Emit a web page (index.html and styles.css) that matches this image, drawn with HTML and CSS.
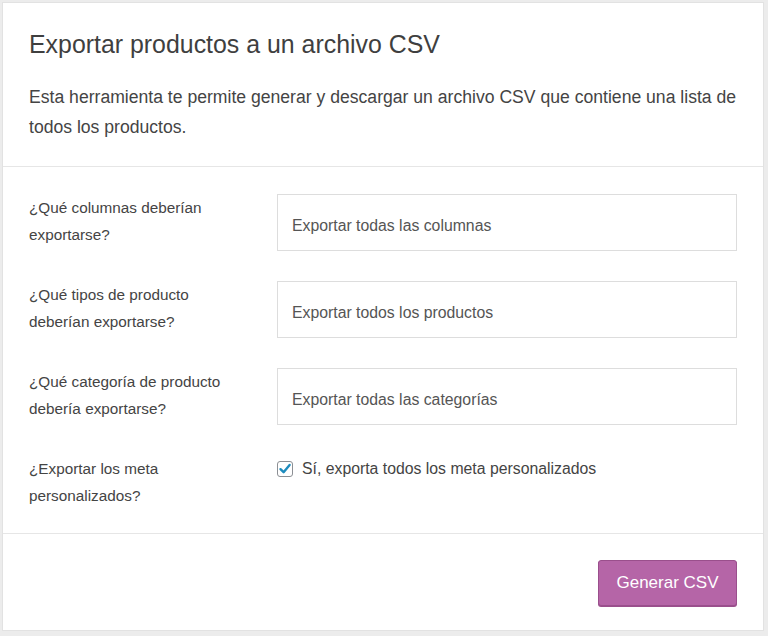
FILE: index.html
```html
<!DOCTYPE html>
<html lang="es">
<head>
<meta charset="utf-8">
<title>Exportar productos</title>
<link rel="stylesheet" href="styles.css">
</head>
<body>
<div class="card">
  <header class="card-head">
    <h1 class="title">Exportar productos a un archivo CSV</h1>
    <p class="desc">Esta herramienta te permite generar y descargar un archivo CSV que contiene una lista de todos los productos.</p>
  </header>
  <section class="form">
    <div class="row">
      <label class="label">¿Qué columnas deberían exportarse?</label>
      <div class="field">Exportar todas las columnas</div>
    </div>
    <div class="row">
      <label class="label">¿Qué tipos de producto deberían exportarse?</label>
      <div class="field">Exportar todos los productos</div>
    </div>
    <div class="row">
      <label class="label">¿Qué categoría de producto debería exportarse?</label>
      <div class="field">Exportar todas las categorías</div>
    </div>
    <div class="row row-check">
      <label class="label">¿Exportar los meta personalizados?</label>
      <div class="check">
        <span class="box"><svg width="14" height="14" viewBox="0 0 14 14"><path d="M2.5 7.2 L5.6 10.2 L11.6 3" fill="none" stroke="#1e8cbe" stroke-width="2.4" stroke-linecap="round" stroke-linejoin="round"/></svg></span>
        <span class="check-text">Sí, exporta todos los meta personalizados</span>
      </div>
    </div>
  </section>
  <footer class="card-foot">
    <button class="btn">Generar CSV</button>
  </footer>
</div>
</body>
</html>
```
FILE: styles.css
```css
html, body {
  margin: 0;
  padding: 0;
}
body {
  background: #ececec;
  font-family: "Liberation Sans", Arial, sans-serif;
  color: #444;
  padding: 2px 4px 5px 2px;
}
.card {
  background: #fff;
  border: 1px solid #e2e2e2;
  box-sizing: border-box;
  height: 629px;
}
.card-head {
  padding: 26px 26px 24px;
  border-bottom: 1px solid #e6e6e6;
}
.title {
  margin: 0;
  font-size: 24.9px;
  line-height: 30px;
  font-weight: 400;
  color: #3f3f3f;
}
.desc {
  margin: 23px 0 0;
  font-size: 17.6px;
  line-height: 30px;
  color: #444;
}
.form {
  padding: 27px 26px 24px;
  border-bottom: 1px solid #e6e6e6;
  display: flex;
  flex-direction: column;
  gap: 30px;
}
.row {
  display: grid;
  grid-template-columns: 248px 1fr;
  align-items: start;
}
.label {
  font-size: 15.3px;
  line-height: 27px;
  color: #444;
  padding-right: 50px;
}
.field {
  height: 57px;
  box-sizing: border-box;
  border: 1px solid #ddd;
  display: flex;
  align-items: center;
  padding: 6px 14px 0;
  font-size: 15.8px;
  color: #555;
}
.check {
  display: flex;
  align-items: center;
  gap: 9px;
  height: 27px;
}
.box {
  width: 16px;
  height: 16px;
  border: 1px solid #8c8f94;
  border-radius: 3px;
  box-sizing: border-box;
  display: flex;
  align-items: center;
  justify-content: center;
  background: #fff;
}
.check-text {
  font-size: 15.8px;
  color: #444;
}
.card-foot {
  padding: 26px 26px 0;
  display: flex;
  justify-content: flex-end;
}
.btn {
  width: 139px;
  height: 46px;
  background: #b565a7;
  border: 1px solid #9a4f8c;
  border-radius: 3px;
  color: #fff;
  font-family: "Liberation Sans", Arial, sans-serif;
  font-size: 17px;
  box-shadow: 0 1px 0 #9a4f8c;
}
```
